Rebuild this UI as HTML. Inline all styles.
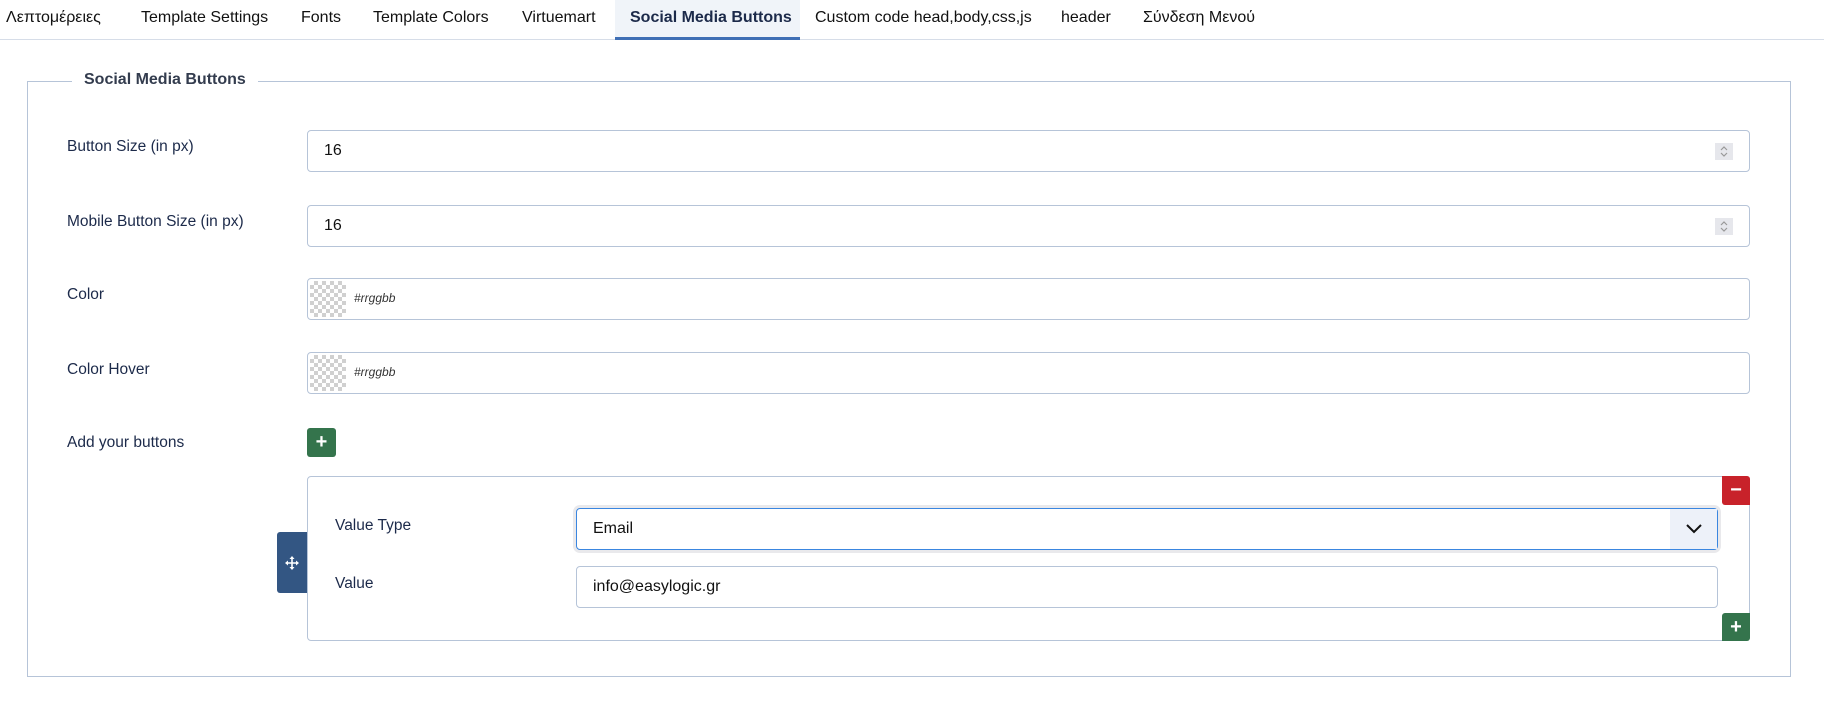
<!DOCTYPE html>
<html><head><meta charset="utf-8"><style>
*{box-sizing:border-box;margin:0;padding:0}
body{width:1824px;height:715px;background:#fff;font-family:"Liberation Sans",sans-serif;color:#1c2a4a;position:relative;overflow:hidden}
.a{position:absolute}
.tabs{left:0;top:0;width:1824px;height:40px;border-bottom:1px solid #d6dde8}
.tab{position:absolute;top:9px;font-size:16px;color:#111}
.act{left:615px;top:0;width:185px;height:40px;background:#f0f4f9;border-bottom:3px solid #3f6fb5}
.fs{left:27px;top:81px;width:1764px;height:596px;border:1px solid #b6c4d8}
.leg{left:72px;top:71px;background:#fff;padding:0 12px;font-size:16px;font-weight:bold;color:#333c4e}
.lbl{font-size:15.5px;color:#1c2a4a}
.in{border:1px solid #b6c4d8;border-radius:4px;background:#fff;font-size:16px;color:#111;padding-left:16px;display:flex;align-items:center}
.spin{position:absolute;right:16px;top:12px;width:18px;height:17px;background:#e6e7ec}
.chk{position:absolute;left:2px;top:2px;width:36px;height:36px;background-color:#fff;background-image:linear-gradient(45deg,#d0d0d0 25%,transparent 25%,transparent 75%,#d0d0d0 75%),linear-gradient(45deg,#d0d0d0 25%,transparent 25%,transparent 75%,#d0d0d0 75%);background-size:8px 8px;background-position:0 0,4px 4px}
.hex{position:absolute;left:46px;top:12px;font-size:12px;font-style:italic;color:#333}
.btn{color:#fff;font-weight:bold;font-size:20px;display:flex;align-items:center;justify-content:center;border-radius:3px}
</style></head><body>
<div class="a tabs"></div>
<div class="a act"></div>
<div class="tab" style="left:6px">Λεπτομέρειες</div>
<div class="tab" style="left:141px">Template Settings</div>
<div class="tab" style="left:301px">Fonts</div>
<div class="tab" style="left:373px">Template Colors</div>
<div class="tab" style="left:522px">Virtuemart</div>
<div class="tab" style="left:630px;color:#1c2a4a;font-weight:bold">Social Media Buttons</div>
<div class="tab" style="left:815px">Custom code head,body,css,js</div>
<div class="tab" style="left:1061px">header</div>
<div class="tab" style="left:1143px">Σύνδεση Μενού</div>

<div class="a fs"></div>
<div class="a leg">Social Media Buttons</div>

<div class="a lbl" style="left:67px;top:138px">Button Size (in px)</div>
<div class="a lbl" style="left:67px;top:213px">Mobile Button Size (in px)</div>
<div class="a lbl" style="left:67px;top:286px">Color</div>
<div class="a lbl" style="left:67px;top:361px">Color Hover</div>
<div class="a lbl" style="left:67px;top:434px">Add your buttons</div>

<div class="a in" style="left:307px;top:130px;width:1443px;height:42px">16<svg class="spin" viewBox="0 0 18 17"><path d="M6 7l3-3 3 3M6 10l3 3 3-3" fill="none" stroke="#999" stroke-width="1.2"/></svg></div>
<div class="a in" style="left:307px;top:205px;width:1443px;height:42px">16<svg class="spin" viewBox="0 0 18 17"><path d="M6 7l3-3 3 3M6 10l3 3 3-3" fill="none" stroke="#999" stroke-width="1.2"/></svg></div>
<div class="a in" style="left:307px;top:278px;width:1443px;height:42px"><div class="chk"></div><div class="hex">#rrggbb</div></div>
<div class="a in" style="left:307px;top:352px;width:1443px;height:42px"><div class="chk"></div><div class="hex">#rrggbb</div></div>

<div class="a btn" style="left:307px;top:428px;width:29px;height:29px;background:#34744c">+</div>

<div class="a" style="left:307px;top:476px;width:1443px;height:165px;border:1px solid #b6c4d8;border-radius:4px"></div>
<div class="a btn" style="left:1722px;top:476px;width:28px;height:29px;background:#c8222a;border-radius:0 3px 0 3px">−</div>
<div class="a btn" style="left:1722px;top:613px;width:28px;height:28px;background:#34744c;border-radius:3px 0 3px 0">+</div>
<div class="a btn" style="left:277px;top:532px;width:30px;height:61px;background:#335683;border-radius:3px 0 0 3px"><svg width="14" height="14" viewBox="0 0 14 14"><path d="M7 1v12M1 7h12" stroke="#fff" stroke-width="1.6"/><path d="M7 0l2.5 3h-5zM7 14l2.5-3h-5zM0 7l3-2.5v5zM14 7l-3-2.5v5z" fill="#fff"/></svg></div>

<div class="a lbl" style="left:335px;top:517px">Value Type</div>
<div class="a lbl" style="left:335px;top:575px">Value</div>
<div class="a in" style="left:576px;top:508px;width:1142px;height:42px;border-color:#3a86e0;box-shadow:0 0 0 3px #e9e9ec">Email
<div style="position:absolute;right:0;top:0;width:47px;height:40px;background:#edf1f9;display:flex;align-items:center;justify-content:center"><svg width="16" height="10" viewBox="0 0 16 10"><path d="M1 1l7 7 7-7" fill="none" stroke="#111" stroke-width="2"/></svg></div></div>
<div class="a in" style="left:576px;top:566px;width:1142px;height:42px">info@easylogic.gr</div>
</body></html>
